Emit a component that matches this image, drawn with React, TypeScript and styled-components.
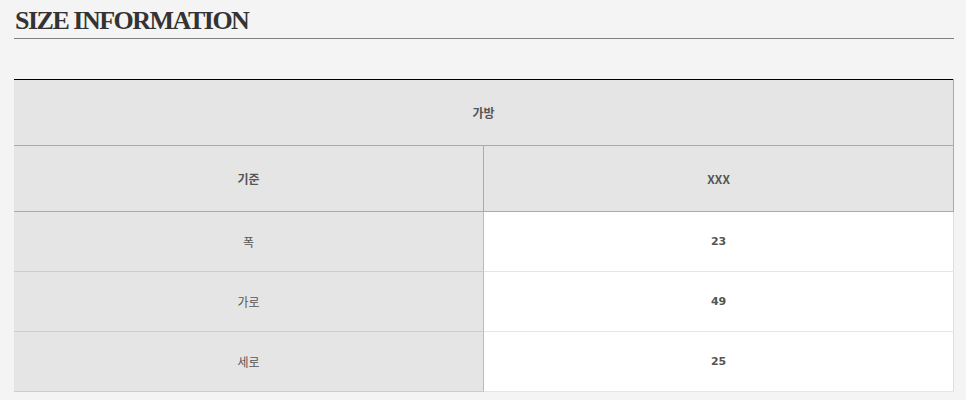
import styled, { createGlobalStyle } from "styled-components";

const GlobalStyle = createGlobalStyle`
  html, body {
    margin: 0;
    padding: 0;
    background: #f4f4f4;
  }
`;

const Page = styled.div`
  padding: 0 12px 0 14px;
  font-family: "Liberation Sans", "Noto Sans CJK KR", sans-serif;
`;

const Title = styled.h2`
  margin: 0 0 40px;
  padding: 8px 0 0 1px;
  height: 39px;
  box-sizing: border-box;
  font-family: "Liberation Serif", serif;
  font-size: 26px;
  font-weight: bold;
  letter-spacing: -1.5px;
  line-height: 26px;
  color: #333;
  border-bottom: 1px solid #808080;
`;

const SizeTable = styled.table`
  width: 940px;
  border-collapse: collapse;
  border-top: 1px solid #000;
  table-layout: fixed;
`;

const HeadCell = styled.th`
  height: 65px;
  padding: 0;
  background: #e5e5e5;
  color: #555;
  font-family: "Noto Sans CJK KR", sans-serif;
  font-size: 12px;
  font-weight: bold;
  text-align: center;
  border-bottom: 1px solid #aaa;
  border-right: 1px solid #aaa;
  & + & {
    border-left: 1px solid #aaa;
  }
`;

const LabelCell = styled.td`
  height: 59px;
  padding: 0;
  background: #e5e5e5;
  color: #555;
  font-family: "Noto Sans CJK KR", sans-serif;
  font-size: 12px;
  text-align: center;
  border-bottom: 1px solid #ccc;
  border-right: 1px solid #bbb;
`;

const ValueCell = styled.td`
  height: 59px;
  padding: 0;
  background: #fff;
  color: #555;
  font-family: "DejaVu Sans", sans-serif;
  font-size: 11px;
  font-weight: bold;
  text-align: center;
  border-bottom: 1px solid #e5e5e5;
  border-right: 1px solid #ddd;
`;

const rows = [
  { label: "폭", value: "23" },
  { label: "가로", value: "49" },
  { label: "세로", value: "25" },
];

const App = () => {
  return (
    <>
      <GlobalStyle />
      <Page>
        <Title>SIZE INFORMATION</Title>
        <SizeTable>
          <thead>
            <tr>
              <HeadCell colSpan={2}>가방</HeadCell>
            </tr>
            <tr>
              <HeadCell>기준</HeadCell>
              <HeadCell>XXX</HeadCell>
            </tr>
          </thead>
          <tbody>
            {rows.map((r) => (
              <tr key={r.label}>
                <LabelCell>{r.label}</LabelCell>
                <ValueCell>{r.value}</ValueCell>
              </tr>
            ))}
          </tbody>
        </SizeTable>
      </Page>
    </>
  );
};

export default App;
